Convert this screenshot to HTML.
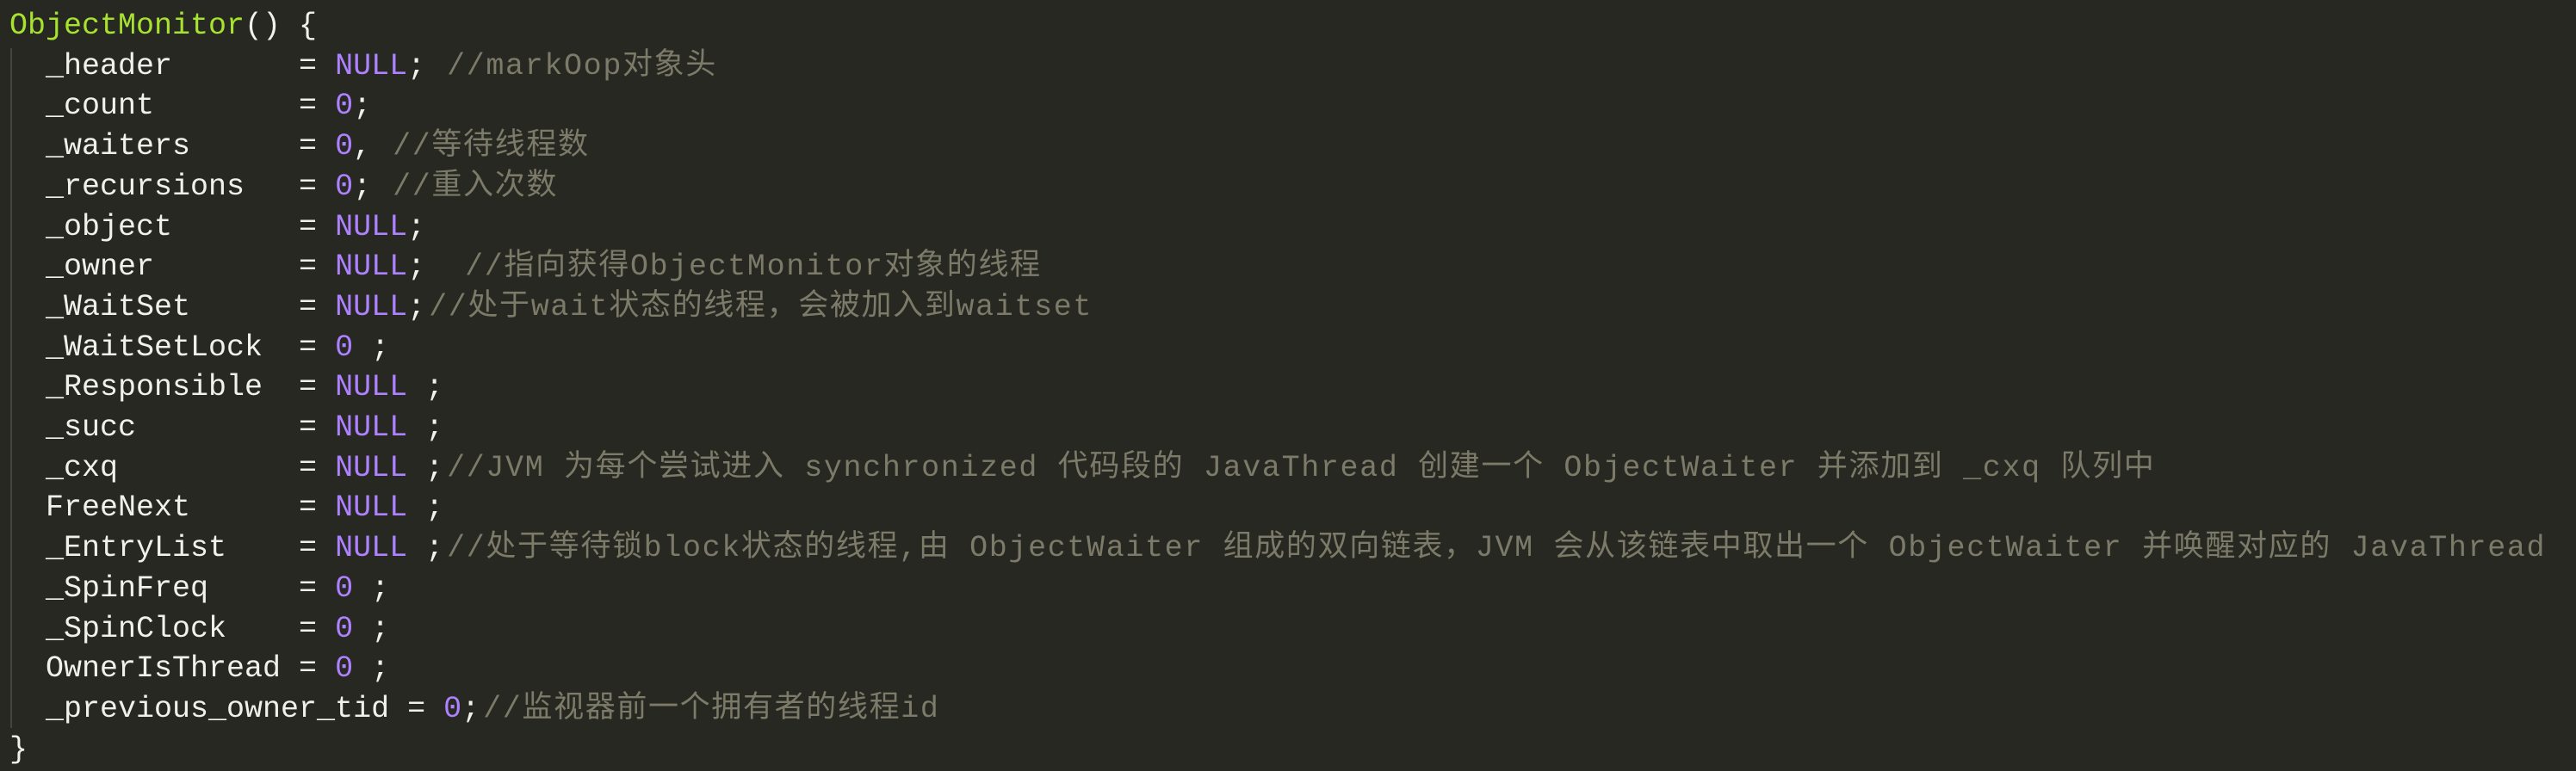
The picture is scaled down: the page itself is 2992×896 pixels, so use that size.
<!DOCTYPE html>
<html><head><meta charset="utf-8"><style>
html,body{margin:0;padding:0;background:#272822;width:2992px;height:896px;overflow:hidden}
pre{margin:0;position:absolute;left:11px;top:7px;font-family:"Liberation Mono","Noto Sans CJK SC",monospace;font-size:35px;line-height:46.7px;color:#f1f1eb;white-space:pre}
.g{color:#a6e22e}.p{color:#ae81ff}.c{color:#7c7a68;letter-spacing:1.65px;margin-left:4px}
.guide{position:absolute;left:12px;top:56px;width:2px;height:790px;background:#45453e}
</style></head><body>
<div class="guide"></div>
<pre><span class="g">ObjectMonitor</span>() {
  _header       = <span class="p">NULL</span>; <span class="c">//markOop对象头</span>
  _count        = <span class="p">0</span>;
  _waiters      = <span class="p">0</span>, <span class="c">//等待线程数</span>
  _recursions   = <span class="p">0</span>; <span class="c">//重入次数</span>
  _object       = <span class="p">NULL</span>;
  _owner        = <span class="p">NULL</span>;  <span class="c">//指向获得ObjectMonitor对象的线程</span>
  _WaitSet      = <span class="p">NULL</span>;<span class="c">//处于wait状态的线程，会被加入到waitset</span>
  _WaitSetLock  = <span class="p">0</span> ;
  _Responsible  = <span class="p">NULL</span> ;
  _succ         = <span class="p">NULL</span> ;
  _cxq          = <span class="p">NULL</span> ;<span class="c">//JVM 为每个尝试进入 synchronized 代码段的 JavaThread 创建一个 ObjectWaiter 并添加到 _cxq 队列中</span>
  FreeNext      = <span class="p">NULL</span> ;
  _EntryList    = <span class="p">NULL</span> ;<span class="c">//处于等待锁block状态的线程,由 ObjectWaiter 组成的双向链表，JVM 会从该链表中取出一个 ObjectWaiter 并唤醒对应的 JavaThread</span>
  _SpinFreq     = <span class="p">0</span> ;
  _SpinClock    = <span class="p">0</span> ;
  OwnerIsThread = <span class="p">0</span> ;
  _previous_owner_tid = <span class="p">0</span>;<span class="c">//监视器前一个拥有者的线程id</span>
}</pre>
</body></html>
